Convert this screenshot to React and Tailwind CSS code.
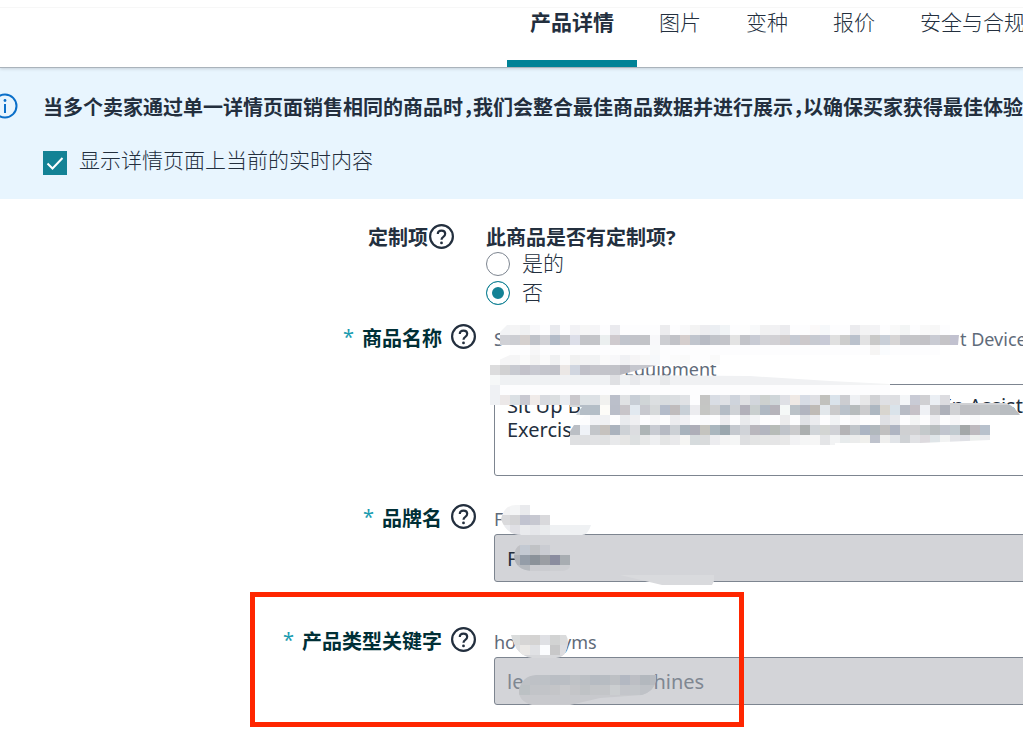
import { useState } from "react";

const TABS = ["产品详情", "图片", "变种", "报价", "安全与合规"];

// Blocks of the smudged-out text, one entry per 10px row.
// "." is a block that stays plain white, "-" is left see-through.
const TITLE_ROWS = [
  { x: 10, y: 1, cells: "f2f3f5 f4f4f5 f0f1f2 f8f8fa . e9eaee . f2f2f5 f6f6f6 f5f5f7 . eaeaee . . . . ececee . f9f9fa f3f3f3 ededf0 ebeef2 f1f4f6 . fdfdfd f8f9fa f1f1f2 f1f1f3 ebebee . . fbf9f9 f6f8fa . . ebebee f3f3f4 f3f3f5 . f9f9f9 f3f5f5 . f9f9f9 f7f7f7 . -" },
  { x: 10, y: 11, cells: "d0d1d6 cdced3 d5d0ce bfc2c9 d2d2d6 b4bcc8 c4c5c9 dcdee8 c3c4c8 c4c5c9 ebefef cfcace c1c5cd c3c4ca c3c4c8 f8f8fa cdced2 c2c3c8 d5cecd c0c5cd b8bbc4 c1c4ca c4c5ca e3e3e3 c3c4c9 c8cbd4 d3d3d7 d2d1d5 d0cccd c6cad3 cdc9cb c7cad1 c8cad6 e0e0e0 cdcdcc bac1cc e2e2e3 c9c9c8 c9cfd8 d7d5d5 c4c5ca c5c5c8 c3c2c6 c9cbd3 c5c4c7 c1c1cf" },
  { x: 10, y: 21, cells: ". . . f7f7f8 . . . . . . . . . . . f8f9fa . . . . . . . . . . . . . . . . . . . . . f6f5f4 fafcfe . . . . . -" },
  { x: 0, y: 31, cells: "- f5f5f6 f5f5f6 fafafa f3f3f3 fafafa f0f1f2 fbfbfb f1f1f1 f3f3f4 f2f3f4 fafafa f8f8fa f0f1f4 f6f5f6 f8f8f8 f6f8fa . fbfbfb fafafa . . fafafa -" },
  { x: 0, y: 41, cells: "dcdcdd d1d1d2 c8cad1 c3c2ca c8c9d1 c4c5cc c2c3ca ebe7e5 d0d5df c0c0c8 c5c5cb c3c4ca c2c3c9 b8b8c0 c6c7ce c5c6cc c8c8ce" },
  { x: 0, y: 51, cells: "f6f8f8 eff1f3 eff1f3 eff1f3 eff1f3 eff1f3 eff1f3 f0f1f3 eff1f3 eff1f3 eff1f3 eff1f3 dfe0e3 eff1f3 e8e9ec f0f1f3 f0f1f3 e8e9eb f0f1f3 f0f1f3 f0f1f3 f0f1f3 f0f1f3 f0f1f3 f0f1f3 f0f1f3 f0f1f3 f0f1f3 f0f1f3 f0f1f3 f0f1f3 f0f1f3 f0f1f3 f1f2f4 f1f2f4 f2f3f4 f2f3f4 f3f4f5 f3f4f5 f4f5f5" },
  { x: 0, y: 61, cells: "eff1f4 . . . . . . . . . . . . . . . . . . . . . . . . . . . . . . . . . . . . . . . ." },
  { x: 0, y: 71, cells: "eff1f4 ece8e8 dbe0e4 c9c9d1 f0ebe9 d8dadf dbdee0 eaecef cac8cc dde2e5 dde1e5 f1f1ef bbbfca e0e2e4 c8ced6 d0d5d7 dcdfe1 d8dcdf dbdee1 e0e2e5 . c5c5c4 d9dde4 dfe1e5 cfd4dc dfe0e3 d2d6dc cdd1cf cfd6d9 dfe0e5 efe9e5 d7dce5 dfe0e4 c1c1bd dae3eb cccdd1 eff1f4 e7e7e8 d1d2d5 dfe0e4 dedfe2 f4f6f8 c9cbd5 d0d0d3 ebeff4 dcdce0" },
  { x: 80, y: 81, cells: "d6d8da b5bec7 b4bec7 fdfcf8 babec9 c8c5c9 e2e9f0 c8c9cf d6d9da b4bcca c0bcbd c8d0d7 ececef c5c6c4 cfd0d1 b4bcc5 cfd2d6 b2b0ba c9cfcf b0b9c3 b6b4bb f5f8f7 bbc2c8 b2b5c0 bfbbb6 e2e7eb cacacb bac2cb b7bcbd ccccce adb7c1 d8d5cf dae3ea b8bcc5 c6c1c7 eff1f5 c7c7ca aeb1ba d0d1d4 bebfc3 bfc0c4 c2c5c8 bfc2c5 b9bdc1 b9bdc1" },
  { x: 90, y: 91, cells: ". f2f3f6 f0f1f3 . e9ebee f0f0f2 . f7f7f8 . ececef f0f1f4 . f9fafc . ececef . e9eaed f3f4f6 . . ececed . e0e2e6 ebecef . f1f3f5 . f6f6f7 . . dfe0e4 e9eaed . f4f5f5 . ebebee . f6f6f8 . f9f9fa" },
  { x: 80, y: 101, cells: "bbbfc5 eff2f7 c3c6ca c6c2be abb3be ced2d6 dcdde0 aeb5b6 c8cbd2 b6bac3 ccd0d5 a8b3bc aeaeb8 c4c4bf aab6be 9ba7ae c5c9cf d0d3d8 b9b7bd b3b6c0 b7bcb8 c0c4ca cbcbcd acb0b0 d1d5d9 d3d5d3 d0d1d6 b4b4b6 c0c5ca acb5c3 b1b8bd c1c0c0 afb5c2 cfd0d2 d0d0d2 c4c9cb b9bec0 c1c5ce c1cad0 a4a8a9 bdb9be b8c1cc a0a9ad c2c5c8" },
  { x: 80, y: 111, cells: "dfe0e2 dedfe1 e1e2e4 e0e1e2 e8e9eb e6e6e5 dde0e1 e7e8e8 eeeff1 e4e5e5 e9e9eb f5f5f3 d6dbdd d9dbdc ececef f4f4f4 f5f6f6 dedfe1 e3e4e4 e5e6e6 e5e5e6 e8e8e8 f2f2f4 f5f6f6 f6f6f6 e4e5e7 f2f3f4 e7ebec ebecec f0f0ed bfc3cd efefee e1e4e8 cfd2d5 e1e2e5 dddade dfe5e8 f2f3f3 e3e4e8 dfe0e5 edefee ebecef" },
];

const BRAND_HINT_ROWS = [
  { x: 10, y: 1, cells: "f2f2f3 f4f5f6 e9eaed" },
  { x: 10, y: 11, cells: "dadadc d4d4d6 c1c3d0 c7c8d1 d9d9dc" },
  { x: 10, y: 21, cells: "ebecef e0e0e5 e9eaed e5e6ea e9ebed" },
];

const BRAND_ROWS = [
  { x: 20, y: 41, cells: "c0c1c5 c3c9d2 c0c2c5 caccd2" },
  { x: 20, y: 51, cells: "b0b2b7 949da8 8b9299 9b9ea3 8b8d9f a8adb2" },
  { x: 20, y: 61, cells: "bcbdc2 b5b9be cbccd0 cbccd0 cdced2 cdced2" },
];

const TYPE_HINT_ROWS = [
  { x: 20, y: 8, cells: "dadcdc d6d5d5 d4d3d2 dfe0e4 d2d3d3 dadbdc" },
  { x: 20, y: 18, cells: "dfe0e2 eae8e6 e0e1e4 fbfcfe c8c8c9 dddde0" },
];

const TYPE_ROWS = [
  { x: 20, y: 48, cells: "bfc2c6 bfc2c6 bec1c6 bdc1c6 babec4 babec4 bfc2c6 bbbfc4 b6bbc2 b7bcc2 bdc0c4 b3b8c2 bcbec4 b3b8be b7babf" },
  { x: 20, y: 58, cells: "bfc1c4 bcc1c4 c2c4c8 c2c4c8 c4c5c8 c8c9cc c4c5c8 bfc2c5 c3c5c8 c3c5c8 cbced0 c3c5ca c3c6ca bfc2c7 bfc2c6" },
];

function Blocks({ rows }) {
  return rows.map((row) =>
    row.cells.split(" ").map((c, i) =>
      c === "-" ? null : (
        <rect
          key={`${row.y}-${i}`}
          x={row.x + i * 10}
          y={row.y}
          width="10"
          height="10"
          fill={c === "." ? "#fdfdfe" : `#${c}`}
        />
      )
    )
  );
}

function Smudge({ children }) {
  return (
    <svg
      className="pointer-events-none absolute top-0 -left-1 h-[160px] w-[534px] overflow-visible"
      viewBox="0 0 534 160"
      aria-hidden="true"
    >
      {children}
    </svg>
  );
}

function HelpButton() {
  return (
    <button type="button" aria-label="帮助" className="shrink-0">
      <svg width="26" height="26" viewBox="0 0 26 26" fill="none" stroke="#232f3e" strokeWidth="2.2">
        <circle cx="13.5" cy="12.5" r="11.4" />
        <path d="M9.8 10.1c0-2.1 1.6-3.5 3.7-3.5s3.7 1.3 3.7 3.2c0 1.5-.8 2.3-1.9 3.1-1.2.8-1.8 1.4-1.8 2.9" />
        <circle cx="13.5" cy="18.9" r="1.4" fill="#232f3e" stroke="none" />
      </svg>
    </button>
  );
}

function FieldRow({ id, label, children, className }) {
  return (
    <div className={`flex gap-[18px] ${className}`}>
      <div className="flex h-[26px] w-[476px] shrink-0 items-center justify-end">
        <span className="mr-2 text-xl leading-5 text-[#1a9cb0]">*</span>
        <label htmlFor={id} className="mr-2 pt-1 text-xl font-bold text-[#002f36]">
          {label}
        </label>
        <HelpButton />
      </div>
      <div className="relative -mr-2 min-w-0 flex-1">{children}</div>
    </div>
  );
}

function RadioOption({ label, checked, onChange }) {
  return (
    <label className="flex h-6 items-center gap-3 text-[21px] text-[#232f3e]">
      <input
        type="radio"
        name="customizable"
        checked={checked}
        onChange={onChange}
        className="h-6 w-6 shrink-0 appearance-none rounded-full border border-[#7d8590] bg-white checked:border-[#138295] checked:bg-[#138295] checked:shadow-[inset_0_0_0_5px_white]"
      />
      {label}
    </label>
  );
}

export default function App() {
  const [tab, setTab] = useState(TABS[0]);
  const [showLive, setShowLive] = useState(true);
  const [customizable, setCustomizable] = useState(false);

  return (
    <div className="relative min-h-screen overflow-hidden bg-white pb-9 font-['Noto_Sans','Noto_Sans_CJK_SC',sans-serif] text-[#232f3e]">
      <header className="relative border-b border-[#aab3bb] pt-[7px] shadow-[0_1px_3px_rgba(0,0,0,0.15)]">
        <nav className="flex h-[60px] border-t border-[#f7f7f7] pl-[507px] whitespace-nowrap">
          {TABS.map((name) => (
            <button
              key={name}
              type="button"
              onClick={() => setTab(name)}
              className={`-mr-px shrink-0 border-b-[7px] px-[23px] pb-6 text-[21px] leading-7 ${
                tab === name ? "border-[#008296] font-bold" : "border-transparent font-light"
              }`}
            >
              {name}
            </button>
          ))}
        </nav>
      </header>

      <section className="flex bg-[#e8f5fe] pt-[25px] pb-6">
        <svg className="-ml-2 h-[26px] w-[26px] shrink-0" viewBox="0 0 26 26" fill="none" stroke="#0a6fc9" strokeWidth="2">
          <circle cx="13" cy="13" r="11.5" />
          <path d="M13 11v9" />
          <circle cx="13" cy="7.5" r="1.4" fill="#0a6fc9" stroke="none" />
        </svg>
        <div className="ml-[25px] min-w-0 flex-1">
          <p className="text-xl leading-[30px] font-bold whitespace-nowrap [font-feature-settings:'halt']">
            当多个卖家通过单一详情页面销售相同的商品时，我们会整合最佳商品数据并进行展示，以确保买家获得最佳体验
          </p>
          <label className="mt-[23px] flex h-[29px] items-center gap-3 text-[21px] font-light">
            <span className="relative mt-1 h-6 w-6">
              <input
                type="checkbox"
                checked={showLive}
                onChange={(e) => setShowLive(e.target.checked)}
                className="block h-6 w-6 appearance-none border border-[#138295] bg-white checked:bg-[#138295]"
              />
              {showLive && (
                <svg className="pointer-events-none absolute inset-0" viewBox="0 0 24 24" fill="none" stroke="#fff" strokeWidth="2">
                  <path d="M4.5 12.5l5 5L19.5 7" />
                </svg>
              )}
            </span>
            显示详情页面上当前的实时内容
          </label>
        </div>
      </section>

      <form className="pt-[25px]">
        <div className="flex gap-8">
          <div className="flex h-[26px] w-[454px] shrink-0 items-center justify-end text-xl font-bold">
            <span className="pt-[2px]">定制项</span>
            <HelpButton />
          </div>
          <fieldset>
            <legend className="text-xl leading-7 font-bold">此商品是否有定制项?</legend>
            <div className="flex flex-col gap-[5px] font-light">
              <RadioOption label="是的" checked={customizable} onChange={() => setCustomizable(true)} />
              <RadioOption label="否" checked={!customizable} onChange={() => setCustomizable(false)} />
            </div>
          </fieldset>
        </div>

        <FieldRow id="title" label="商品名称" className="mt-[19px]">
          <p className="flex text-lg leading-[30px] whitespace-nowrap text-[#5f6b7a]">
            <span className="w-[466px] shrink-0">S</span>
            <span>t Device</span>
          </p>
          <p className="pl-[130px] text-lg leading-[30px] text-[#5f6b7a]">Equipment</p>
          <textarea
            id="title"
            defaultValue={"Sit Up B" + " ".repeat(70) + "In Assist\nExercis"}
            className="block h-[92px] w-full resize-none overflow-hidden rounded-[3px] border border-[#7d8590] bg-white px-3 py-[9px] text-xl leading-6 whitespace-pre"
          />
          <Smudge>
            <clipPath id="title-shape">
              <path d="M10 8L17 1H470L468 21V31H230V41H167L130 51L260 52L340 57L400 60V71H460V79H515Q522 80 530 91H500V116L430 119H345V121H80L77 112L84 101L96 91H86L92 83H0V40L20 31V21H10Z" />
            </clipPath>
            <g clipPath="url(#title-shape)" shapeRendering="crispEdges">
              <rect x="460" y="79" width="70" height="2" fill="#d0d1d4" />
              <Blocks rows={TITLE_ROWS} />
            </g>
          </Smudge>
        </FieldRow>

        <FieldRow id="brand" label="品牌名" className="mt-7">
          <p className="text-lg leading-[30px] text-[#5f6b7a]">F</p>
          <input
            id="brand"
            readOnly
            defaultValue="F"
            className="block h-12 w-full rounded-[3px] border border-[#7d8590] bg-[#d3d4d8] px-3 text-xl"
          />
          <Smudge>
            <clipPath id="brand-hint-shape">
              <path d="M11 15Q14 1 26 1H40V11H60V21H101Q98 31 92 31H32Q16 31 11 15Z" />
            </clipPath>
            <clipPath id="brand-shape">
              <path d="M30 41H60V51H80V61Q80 67 70 67H42Q25 66 24 52Q25 43 30 41Z" />
            </clipPath>
            <g clipPath="url(#brand-hint-shape)" shapeRendering="crispEdges">
              <rect x="60" y="21" width="50" height="10" fill="#eff1f3" />
              <Blocks rows={BRAND_HINT_ROWS} />
            </g>
            <g clipPath="url(#brand-shape)" shapeRendering="crispEdges">
              <Blocks rows={BRAND_ROWS} />
            </g>
            <path d="M130 71H224V77L222 81H172Z" fill="#d9dadd" />
          </Smudge>
        </FieldRow>

        <FieldRow id="type" label="产品类型关键字" className="mt-[45px]">
          <p className="flex text-lg leading-[30px] text-[#5f6b7a]">
            <span className="w-[68px]">ho</span>
            <span>yms</span>
          </p>
          <input
            id="type"
            disabled
            defaultValue={"le" + " ".repeat(25) + "hines"}
            className="block h-12 w-full rounded-[3px] border border-[#7d8590] bg-[#d3d4d8] px-3 text-xl whitespace-pre text-[#7f8792]"
          />
          <Smudge>
            <clipPath id="type-hint-shape">
              <path d="M21 8H76Q80 14 76 24Q74 30 66 31H42Q26 29 21 8Z" />
            </clipPath>
            <clipPath id="type-shape">
              <path d="M46 48H166V54Q164 64 152 68L110 71L80 78H42Q28 74 29 63Q32 49 46 48Z" />
            </clipPath>
            <g clipPath="url(#type-hint-shape)" shapeRendering="crispEdges">
              <rect x="20" y="20" width="60" height="14" fill="#d7d8db" />
              <Blocks rows={TYPE_HINT_ROWS} />
            </g>
            <g clipPath="url(#type-shape)" shapeRendering="crispEdges">
              <rect x="28" y="60" width="140" height="20" fill="#c8c9cd" />
              <Blocks rows={TYPE_ROWS} />
            </g>
          </Smudge>
        </FieldRow>
      </form>

      {/* Highlight drawn over the keyword field */}
      <div className="pointer-events-none absolute top-[592px] left-[250px] h-[135px] w-[494px] border-5 border-[#ff2600]" />
    </div>
  );
}
